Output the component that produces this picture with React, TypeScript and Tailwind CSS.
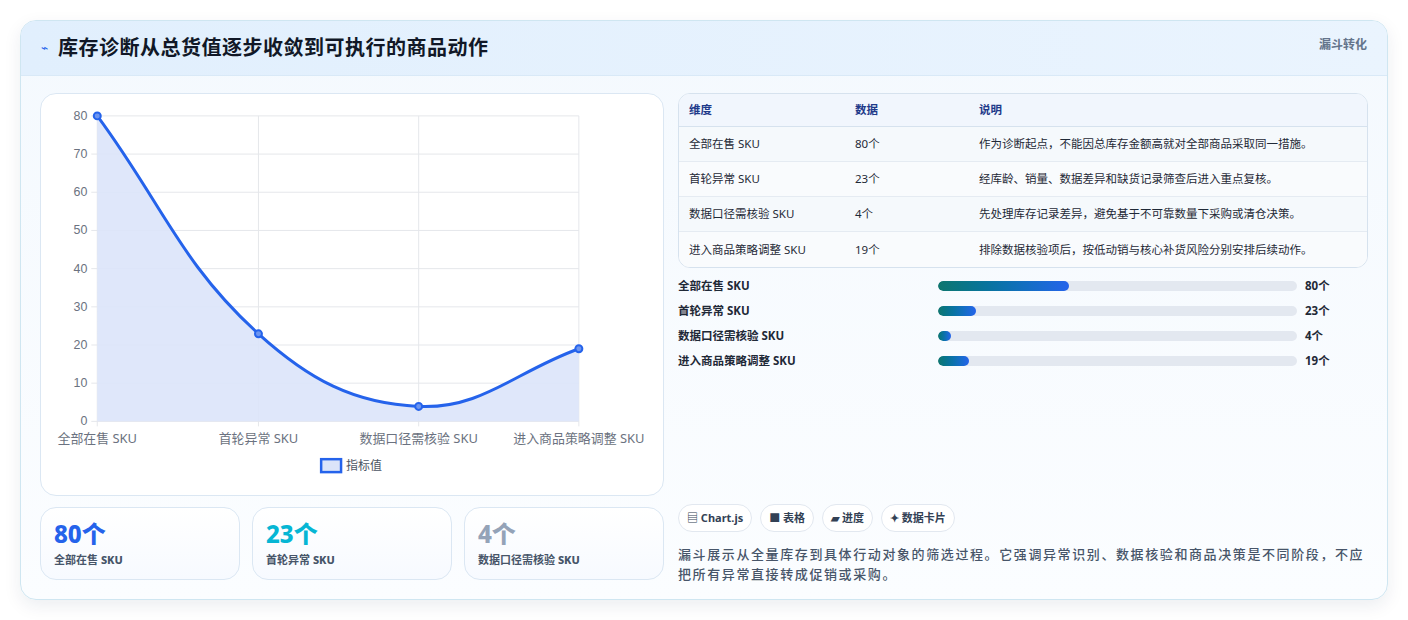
import React from "react";

const font = { fontFamily: '"Noto Sans", "Noto Sans CJK SC", sans-serif' };
const rows = [
  ["全部在售 SKU", "80个", "作为诊断起点，不能因总库存金额高就对全部商品采取同一措施。", 80],
  ["首轮异常 SKU", "23个", "经库龄、销量、数据差异和缺货记录筛查后进入重点复核。", 23],
  ["数据口径需核验 SKU", "4个", "先处理库存记录差异，避免基于不可靠数量下采购或清仓决策。", 4],
  ["进入商品策略调整 SKU", "19个", "排除数据核验项后，按低动销与核心补货风险分别安排后续动作。", 19],
] as const;

function Chart() {
  const ys = Array.from({ length: 9 }, (_, i) => i);
  const xs = [96, 258, 419, 580];
  const labels = ["全部在售 SKU", "首轮异常 SKU", "数据口径需核验 SKU", "进入商品策略调整 SKU"];
  const curve = "M96 115 C160.8 202.6 179.7 263.2 258 334 C308.9 380 353.5 404 419 407 C482.3 410 515.6 372.2 580 349";
  return (
    <svg viewBox="40 93 624 403" width="100%" height="100%" style={{ fontFamily: '"Liberation Sans Narrow","Liberation Sans","Noto Sans CJK SC",sans-serif' }}>
      {ys.map((i) => {
        const y = 115 + i * 38.375;
        return (
          <g key={i}>
            <line x1={90} x2={580} y1={y} y2={y} stroke="#e5e7eb" />
            <text x={86} y={y + 4} textAnchor="end" fontSize="12.5" fill="#6b7280">{80 - i * 10}</text>
          </g>
        );
      })}
      {xs.map((x, i) => (
        <g key={x}>
          <line x1={x} x2={x} y1={115} y2={427} stroke="#e5e7eb" />
          <text x={x} y={444} textAnchor="middle" fontSize="13" fill="#6b7280" fontFamily='"Noto Sans","Noto Sans CJK SC",sans-serif'>{labels[i]}</text>
        </g>
      ))}
      <path d={curve + " L580 422 L96 422 Z"} fill="#dbe4f9" opacity="0.9" />
      <path d={curve} fill="none" stroke="#2563eb" strokeWidth="3" />
      {[[96, 115], [258, 334], [419, 407], [580, 349]].map(([x, y]) => (
        <circle key={x} cx={x} cy={y} r="3.5" fill="#6d95ef" stroke="#2563eb" strokeWidth="2" />
      ))}
      <rect x={321} y={460} width={20} height={13} fill="#dbe4f9" stroke="#2563eb" strokeWidth="2.5" />
      <text x={346} y={471} fontSize="12" fill="#4b5563" fontFamily='"Noto Sans","Noto Sans CJK SC",sans-serif'>指标值</text>
    </svg>
  );
}

export default function App() {
  return (
    <div className="min-h-[620px] bg-white p-5" style={font}>
      <div className="h-[580px] rounded-2xl border border-[#cfe6f1] bg-gradient-to-b from-[#f4f9fe] to-[#fbfdff] shadow-[0_6px_18px_rgba(15,40,80,0.08)] overflow-hidden">
        <div className="h-[55px] flex items-center justify-between px-5 bg-gradient-to-r from-[#e1effd] to-[#eaf4fe] border-b border-[#d9e9f7]">
          <div className="flex items-center gap-[10px]">
            <span className="text-[12px] text-[#2563eb]">⌁</span>
            <h1 className="text-[20px] tracking-[0.5px] font-bold text-[#111827]">库存诊断从总货值逐步收敛到可执行的商品动作</h1>
          </div>
          <div className="self-start mt-[15px] text-[12px] font-bold text-[#64748b]">漏斗转化</div>
        </div>
        <div className="flex gap-[14px] px-[19px] pt-[17px]">
          <div className="w-[624px] flex flex-col gap-[11px]">
            <div className="h-[403px] rounded-2xl border border-[#dbe7f3] bg-white">
              <Chart />
            </div>
            <div className="grid grid-cols-3 gap-[12px]">
              {[["80个", "text-[#2563eb]", "全部在售"], ["23个", "text-[#06b6d4]", "首轮异常"], ["4个", "text-[#94a3b8]", "数据口径需核验"]].map(([v, c, l]) => (
                <div key={v} className="h-[73px] rounded-2xl border border-[#dbe7f3] bg-gradient-to-b from-white to-[#f7faff] px-[13px] pt-[10px]">
                  <div className={`text-[24px] font-extrabold leading-[32px] ${c}`}>{v}</div>
                  <div className="text-[11px] font-semibold text-[#475569] mt-[2px]">{l} <b className="font-extrabold">SKU</b></div>
                </div>
              ))}
            </div>
          </div>
          <div className="flex-1 flex flex-col">
            <div className="rounded-xl border border-[#d6e2ee] bg-white overflow-hidden">
              <div className="h-[33px] grid grid-cols-[166px_124px_1fr] items-center px-[10px] bg-[#f1f6fd] border-b border-[#d6e2ee] text-[11.5px] font-semibold text-[#1e3a8a]">
                <span>维度</span><span>数据</span><span>说明</span>
              </div>
              {rows.map((r, i) => (
                <div key={i} className={`h-[35px] grid grid-cols-[166px_124px_1fr] items-center px-[10px] text-[11.5px] text-[#1f2937] ${i < 3 ? "border-b border-[#e5ebf2]" : ""} ${i % 2 ? "bg-[#f9fbfd]" : "bg-[#f5f9fc]"}`}>
                  <span>{r[0]}</span><span>{r[1]}</span><span>{r[2]}</span>
                </div>
              ))}
            </div>
            <div className="mt-[12px] flex flex-col gap-[13px]">
              {rows.map((r) => (
                <div key={r[0]} className="h-[12px] flex items-center text-[11.5px] font-bold text-[#1f2937]">
                  <span className="w-[260px]">{r[0]}</span>
                  <div className="w-[359px] h-[10px] rounded-full bg-[#e3e8f0] overflow-hidden">
                    <div className="h-full rounded-full bg-gradient-to-r from-[#0f766e] to-[#2563eb]" style={{ width: `${Math.max(3.5, (r[3] / 220) * 100)}%` }} />
                  </div>
                  <span className="ml-[8px]">{r[1]}</span>
                </div>
              ))}
            </div>
            <div className="mt-[137px] flex gap-[8px]">
              {["▤ Chart.js", "■ 表格", "▰ 进度", "✦ 数据卡片"].map((t) => (
                <span key={t} className="h-[28px] px-[8px] flex items-center rounded-full border border-[#e2e8f0] bg-white text-[11px] font-bold text-[#334155]">{t}</span>
              ))}
            </div>
            <p className="mt-[12px] text-[13px] tracking-[1.6px] leading-[20px] font-medium text-[#475569]">
              漏斗展示从全量库存到具体行动对象的筛选过程。它强调异常识别、数据核验和商品决策是不同阶段，不应把所有异常直接转成促销或采购。
            </p>
          </div>
        </div>
      </div>
    </div>
  );
}
